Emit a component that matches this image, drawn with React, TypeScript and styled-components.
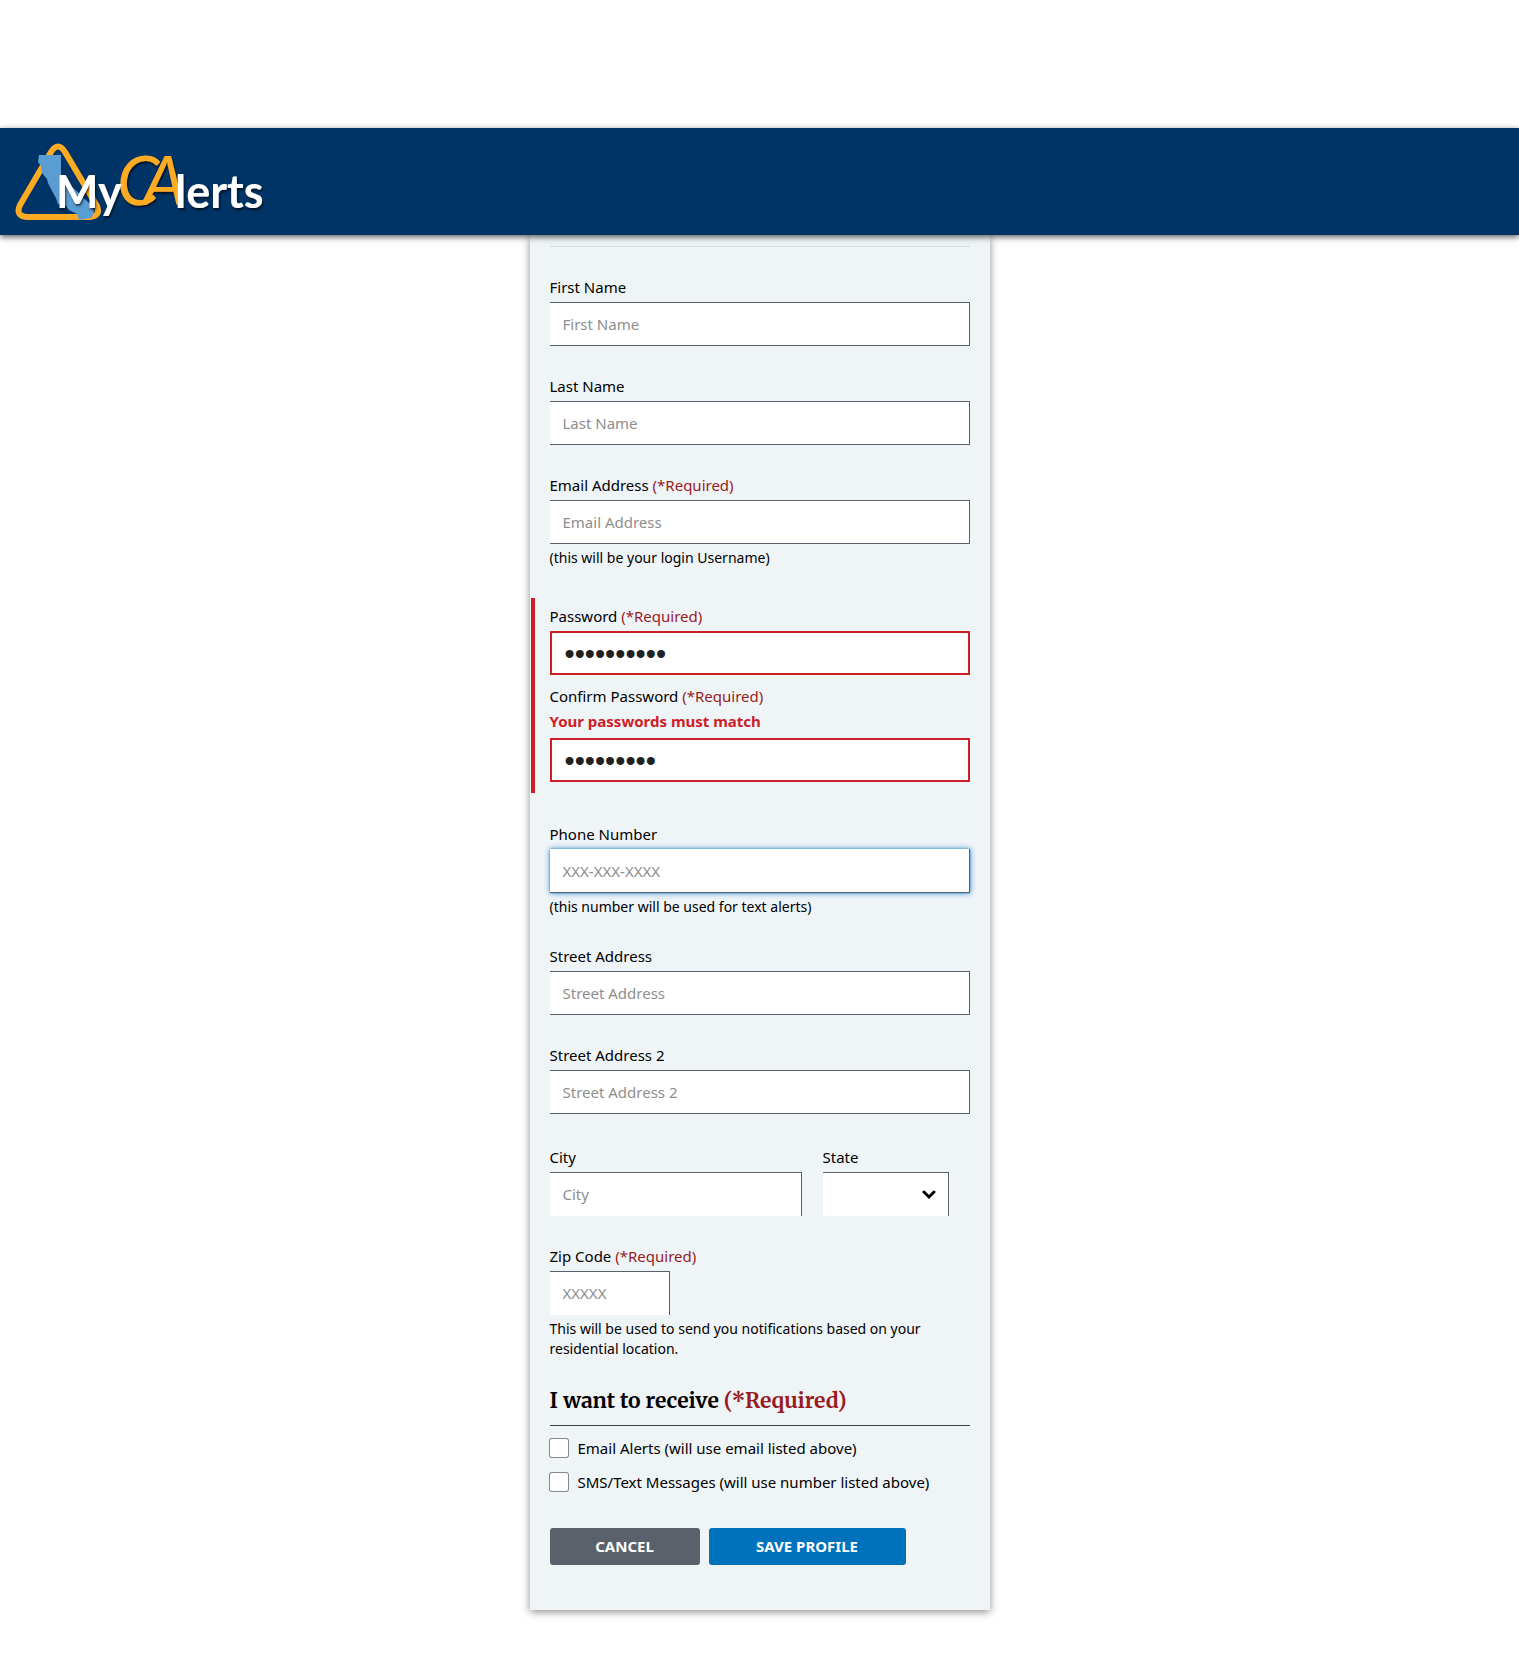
import React from 'react';
import styled, { createGlobalStyle, css } from 'styled-components';

const sans = `"Noto Sans", "Open Sans", sans-serif`;
const serif = `"Merriweather", "DejaVu Serif", serif`;

const GlobalStyle = createGlobalStyle`
  *, *::before, *::after { box-sizing: border-box; }
  body {
    margin: 0;
    background: #fff;
    color: #000;
    font-family: ${sans};
    font-size: 15px;
    line-height: 24px;
  }
`;

const Page = styled.div`
  padding: 128px 0 48px;
`;

const Header = styled.header`
  position: relative;
  z-index: 1;
  display: flex;
  align-items: center;
  padding: 11px 12px 12px;
  background: #003366;
  box-shadow: 0 2px 6px rgba(0, 0, 0, 0.65);
`;

const LogoLink = styled.a`
  display: block;
  height: 84px;
`;

const Card = styled.main`
  max-width: 460px;
  margin: 0 auto;
  padding: 11px 20px 45px;
  background: #eff4f7;
  box-shadow: 0 2px 8px rgba(0, 0, 0, 0.45);
`;

const Divider = styled.hr`
  height: 1px;
  margin: 0 0 28px;
  border: 0;
  background: #d6dadd;
`;

const Form = styled.form`
  display: flex;
  flex-direction: column;
`;

const Field = styled.div<{ $gap?: number }>`
  display: flex;
  flex-direction: column;
  margin-bottom: ${({ $gap = 28 }) => $gap}px;
`;

const Label = styled.label`
  display: block;
  margin-bottom: 3px;
`;

const Required = styled.span`
  color: #981b1e;
`;

const controlBox = css`
  width: 100%;
  height: 44px;
  margin: 0;
  border: solid #5b616b;
  border-radius: 0;
  outline: none;
  background-color: #fff;
  color: #212121;
  font-family: inherit;
  font-size: 15px;
  line-height: 24px;
`;

type InputKind = 'plain' | 'open' | 'error' | 'active';

const Input = styled.input<{ $kind?: InputKind; $width?: string }>`
  ${controlBox}
  padding: 0 13px;
  border-width: 1px 1px 1px 0;
  ${({ $width }) => $width && css`max-width: ${$width};`}
  ${({ $kind }) => $kind === 'open' && css`padding-bottom: 2px; border-width: 1px 1px 0 0;`}
  ${({ $kind }) => $kind === 'error' && css`border: 2px solid #cd2026;`}
  ${({ $kind }) =>
    $kind === 'active' &&
    css`
      border-width: 0 1px 1px 0;
      box-shadow: 0 0 2px #3e94cf, 0 0 6px #3e94cf;
    `}
  &[type='password'] {
    padding: 2px 13px 0;
    font-family: "Liberation Sans", sans-serif;
    font-size: 29px;
  }
  &::placeholder {
    color: #8e8e8e;
    opacity: 1;
  }
`;

const Select = styled.select`
  ${controlBox}
  appearance: none;
  padding: 0 40px 0 12px;
  border-width: 1px 1px 0 0;
`;

const SelectWrap = styled.div`
  position: relative;
  svg {
    position: absolute;
    top: 16px;
    right: 13px;
    pointer-events: none;
  }
`;

const Hint = styled.span`
  margin-top: 4px;
  font-size: 14px;
  line-height: 20px;
`;

const ErrorGroup = styled.div`
  margin: 0 -19px 29px;
  padding: 6px 19px 11px 15px;
  border-left: 4px solid #cd2026;
`;

const ErrorText = styled.strong`
  display: block;
  padding: 1px 0 2px;
  color: #cd2026;
  font-weight: 700;
`;

const CityRow = styled.div`
  display: grid;
  grid-template-columns: 60% 30%;
  column-gap: 5%;
  margin-top: 3px;
`;

const Choices = styled.fieldset`
  min-width: 0;
  margin: 0;
  padding: 0;
  border: 0;
`;

const Legend = styled.legend`
  width: 100%;
  margin-bottom: 10px;
  padding: 0 0 7px;
  border-bottom: 1px solid #3c3f44;
  font-family: ${serif};
  font-size: 21px;
  font-weight: 700;
  line-height: 34px;
`;

const Choice = styled.label`
  display: flex;
  align-items: center;
  gap: 10px;
  margin-bottom: 10px;
`;

const Checkbox = styled.input`
  appearance: none;
  flex: none;
  width: 18px;
  height: 18px;
  margin: 0;
  border-radius: 2px;
  background: #fff;
  box-shadow: 0 0 0 1px #85888c;
`;

const Actions = styled.div`
  display: flex;
  gap: 9px;
  margin-top: 24px;
`;

const Button = styled.button<{ $primary?: boolean }>`
  height: 37px;
  padding: 0 44px 2px;
  min-width: ${({ $primary }) => ($primary ? 197 : 150)}px;
  border: 0;
  border-radius: 3px;
  background: ${({ $primary }) => ($primary ? '#0071bc' : '#5b616b')};
  color: #fff;
  font-family: inherit;
  font-size: 15px;
  font-weight: 700;
  line-height: 20px;
  text-transform: uppercase;
  white-space: nowrap;
`;

function Logo() {
  return (
    <svg width="256" height="84" viewBox="0 0 256 84" role="img" aria-label="MyCAlerts">
      <defs>
        <filter id="lettering" x="-10%" y="-10%" width="120%" height="130%">
          <feDropShadow dx="1" dy="2" stdDeviation="1" floodColor="#000" floodOpacity="0.65" />
        </filter>
      </defs>
      <path
        d="M39 13 Q46 2 53 13 L85 67 Q89 77 78 78 H15 Q3 77 8 66 Z"
        fill="none"
        stroke="#fdab22"
        strokeWidth="6"
        strokeLinejoin="round"
      />
      <path
        d="M27 16 H49 V37 L77 64 L82 71 L81 76 L79 79 L67 81 L65 75 L57 71 L54 67 L46 65 L44 59 L40 52 L36 44 L35 40 L30 34 L29 27 L26 23 Z"
        fill="#5a9dd3"
      />
      <g filter="url(#lettering)" fontFamily="Lato, sans-serif">
        <text x="105 131" y="66" fill="#fdab22" fontSize="68" fontStyle="italic">
          CA
        </text>
        <g fill="#fff" fontSize="45" fontWeight="700">
          <text x="44" y="69">My</text>
          <text x="163" y="69">lerts</text>
        </g>
      </g>
    </svg>
  );
}

interface TextFieldProps {
  id: string;
  label: string;
  placeholder?: string;
  type?: string;
  value?: string;
  required?: boolean;
  hint?: string;
  error?: string;
  kind?: InputKind;
  width?: string;
  gap?: number;
}

function TextField({ id, label, placeholder, type = 'text', value, required, hint, error, kind, width, gap }: TextFieldProps) {
  return (
    <Field $gap={gap}>
      <Label htmlFor={id}>
        {label} {required && <Required>(*Required)</Required>}
        {error && <ErrorText>{error}</ErrorText>}
      </Label>
      <Input id={id} type={type} placeholder={placeholder} defaultValue={value} $kind={kind} $width={width} />
      {hint && <Hint>{hint}</Hint>}
    </Field>
  );
}

export default function App() {
  return (
    <>
      <GlobalStyle />
      <Page>
        <Header>
          <LogoLink href="#">
            <Logo />
          </LogoLink>
        </Header>
        <Card>
          <Divider />
          <Form onSubmit={(event) => event.preventDefault()}>
            <TextField id="first-name" label="First Name" placeholder="First Name" />
            <TextField id="last-name" label="Last Name" placeholder="Last Name" />
            <TextField
              id="email"
              label="Email Address"
              placeholder="Email Address"
              required
              hint="(this will be your login Username)"
              gap={30}
            />
            <ErrorGroup>
              <TextField id="password" label="Password" type="password" value="sunshine10" required kind="error" gap={9} />
              <TextField
                id="confirm-password"
                label="Confirm Password"
                type="password"
                value="sunshine1"
                required
                error="Your passwords must match"
                kind="error"
                gap={0}
              />
            </ErrorGroup>
            <TextField
              id="phone"
              label="Phone Number"
              type="tel"
              placeholder="XXX-XXX-XXXX"
              hint="(this number will be used for text alerts)"
              kind="active"
              gap={27}
            />
            <TextField id="street" label="Street Address" placeholder="Street Address" />
            <TextField id="street-2" label="Street Address 2" placeholder="Street Address 2" />
            <CityRow>
              <TextField id="city" label="City" placeholder="City" kind="open" />
              <Field>
                <Label htmlFor="state">State</Label>
                <SelectWrap>
                  <Select id="state" defaultValue="">
                    <option value="" />
                    <option value="CA">CA</option>
                  </Select>
                  <svg width="14" height="14" viewBox="0 0 14 14" aria-hidden="true">
                    <path d="M2 4 L7 9 L12 4" fill="none" stroke="#000" strokeWidth="3" strokeLinecap="round" />
                  </svg>
                </SelectWrap>
              </Field>
            </CityRow>
            <TextField
              id="zip"
              label="Zip Code"
              placeholder="XXXXX"
              required
              hint="This will be used to send you notifications based on your residential location."
              kind="open"
              width="120px"
              gap={25}
            />
            <Choices>
              <Legend>
                I want to receive <Required>(*Required)</Required>
              </Legend>
              <Choice>
                <Checkbox type="checkbox" name="email-alerts" />
                Email Alerts (will use email listed above)
              </Choice>
              <Choice>
                <Checkbox type="checkbox" name="sms-alerts" />
                SMS/Text Messages (will use number listed above)
              </Choice>
            </Choices>
            <Actions>
              <Button type="button">Cancel</Button>
              <Button type="submit" $primary>
                Save Profile
              </Button>
            </Actions>
          </Form>
        </Card>
      </Page>
    </>
  );
}
